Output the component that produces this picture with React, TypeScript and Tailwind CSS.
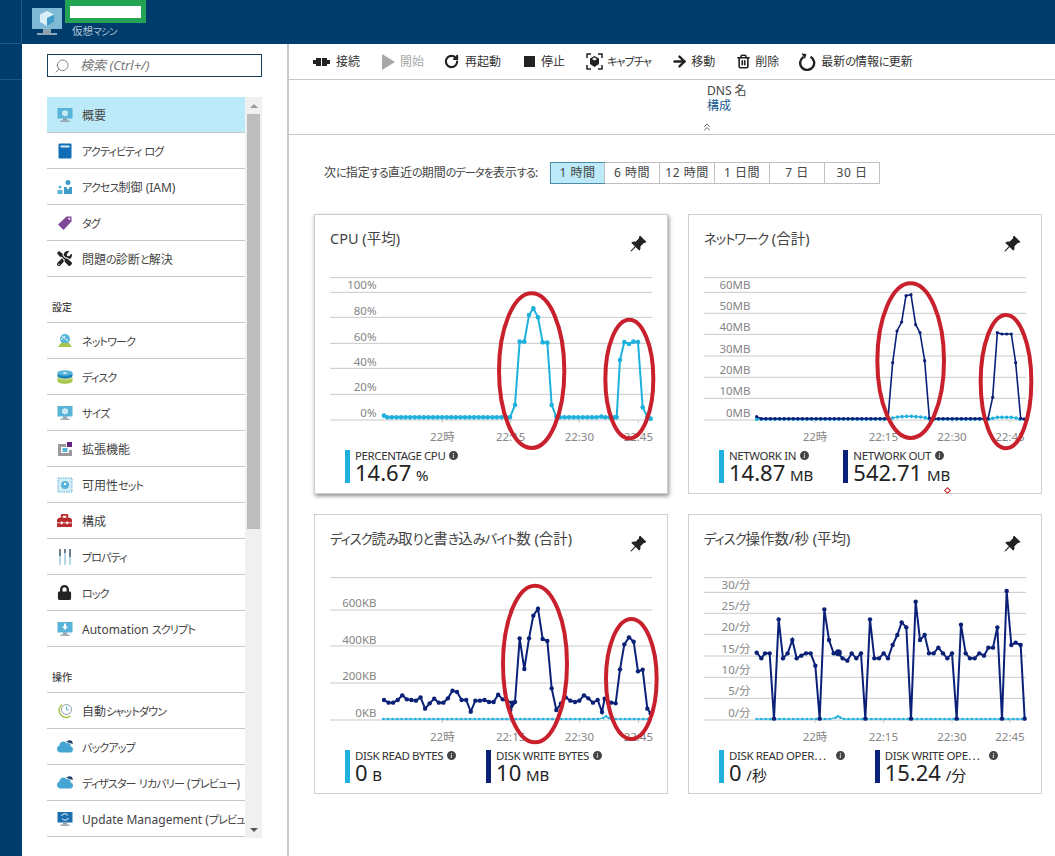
import { ArrowRight, ChevronsUp, RotateCw, Search, Trash2 } from "lucide-react";
import type { ReactNode } from "react";
import { BsInfoCircleFill, BsPinAngleFill } from "react-icons/bs";
import { FaLock, FaToolbox, FaTools, FaCloud } from "react-icons/fa";

type Pt = [number, number];

const LIGHT = "#1fb1dd";
const DARK = "#0b2178";

// chart data is in px of the 3x crops, toChart turns it into card coordinates
const toChart = (p: Pt): Pt => [p[0] / 3 - 4, p[1] / 3 - 64];

const flat = (x0: number, x1: number, y: number): Pt[] => {
  const out: Pt[] = [];
  for (let x = x0; x < x1; x += 13.7) out.push([x, y]);
  return out;
};

const seq = (x0: number, ys: number[]): Pt[] => ys.map((y, i) => [x0 + i * 13.7, y]);

// kana runs are set tighter, the original UI font has narrow kana
const Jp = ({ t }: { t: string }) => (
  <>
    {t.split(/([\u3040-\u30ff]+)/).map((s, i) =>
      i % 2 ? (
        <span key={i} className="text-[0.92em] tracking-[-0.08em]">
          {s}
        </span>
      ) : (
        s
      ),
    )}
  </>
);

const cpu: Pt[] = [
  [222, 617],
  ...flat(232, 600, 622),
  [600, 622], [615, 585], [629, 395], [643, 395], [657, 315], [670, 295], [684, 322],
  [698, 397], [712, 398], [725, 585], [739, 620],
  ...flat(750, 870, 622),
  [874, 620],
  ...flat(886, 920, 622),
  [920, 622], [930, 450], [943, 396], [957, 402], [970, 395], [984, 396], [998, 592], [1012, 620], [1022, 626],
];

const netOut: Pt[] = [
  [218, 620],
  ...flat(232, 612, 626),
  [612, 626], [626, 458], [639, 363], [653, 336], [666, 257], [681, 254], [695, 344],
  [708, 368], [722, 452], [736, 624],
  ...flat(750, 912, 626),
  [912, 626], [926, 562], [940, 368], [954, 372], [968, 372], [982, 372], [995, 458], [1010, 625], [1020, 627],
];

const netIn: Pt[] = [
  ...flat(218, 626, 628),
  [626, 624], [640, 621], [654, 620], [668, 619], [682, 619], [696, 620], [710, 621], [724, 623],
  ...flat(736, 926, 628),
  [926, 625], [940, 622], [954, 622], [968, 622], [982, 622], [996, 624],
  ...flat(1008, 1022, 628),
];

const diskWrite: Pt[] = [
  ...seq(222, [570, 578, 578, 570, 556, 568, 570, 572, 562, 596, 580, 566, 578, 578, 565, 542, 546, 570, 570, 605, 572, 572, 570, 576, 576, 554, 568, 574, 578]),
  [601, 600], [615, 576], [629, 385], [643, 477], [657, 385], [670, 317], [684, 296], [698, 387],
  [712, 393], [725, 535], [739, 600], [753, 580], [767, 562], [781, 572], [795, 576], [808, 572],
  [822, 556], [835, 565], [849, 578], [863, 570], [876, 606], [884, 566], [904, 578], [917, 580],
  [930, 478], [943, 403], [957, 382], [971, 395], [984, 484], [998, 479], [1012, 596], [1022, 610],
];

const diskRead: Pt[] = [...flat(220, 874, 627), [880, 624], [888, 619], [896, 624], ...flat(904, 1022, 627)];

const opsWrite: Pt[] = [
  [218, 428], [232, 445], [243, 430], [257, 430], [270, 626], [284, 328], [297, 445], [311, 430],
  [325, 390], [338, 445], [352, 437], [366, 430], [380, 430], [394, 467], [407, 626], [421, 298],
  [435, 390], [449, 430], [462, 430], [476, 445], [490, 452], [503, 430], [517, 445], [531, 430],
  [544, 626], [558, 328], [571, 445], [585, 445], [599, 430], [612, 445], [626, 405], [640, 375],
  [653, 337], [667, 352], [681, 626], [695, 275], [708, 390], [722, 375], [735, 430], [749, 430],
  [763, 413], [777, 430], [790, 445], [804, 430], [818, 626], [831, 344], [845, 430], [858, 445],
  [872, 445], [886, 430], [900, 437], [913, 413], [927, 413], [940, 352], [954, 626], [968, 243],
  [982, 405], [995, 398], [1010, 405], [1022, 626],
];

const opsRead: Pt[] = [...flat(218, 448, 627), [455, 623], [462, 619], [469, 623], ...flat(480, 1022, 627)];

type ChartProps = {
  grid: number[];
  labels: [string, number][];
  ticks: [string, number][];
  series: { pts: Pt[]; color: string; r: number; w: number }[];
  rings?: [number, number, number, number][];
  blob?: Pt;
};

const Chart = ({ grid, labels, ticks, series, rings, blob }: ChartProps) => (
  <svg width="354" height="176" viewBox="0 0 354 176" className="block overflow-visible">
    {grid.map((y) => (
      <line key={y} x1="16" x2="338" y1={y / 3 - 64} y2={y / 3 - 64} stroke="#c9c9c9" strokeWidth="1" />
    ))}
    {labels.map(([t, y]) => (
      <text key={t} x="62.5" y={y / 3 - 64 + 4} textAnchor="end" fontSize="11.5" fill="#858585">
        {t}
      </text>
    ))}
    {ticks.map(([t, x]) => (
      <g key={t}>
        <line x1={x / 3 - 4} x2={x / 3 - 4} y1="146" y2="149" stroke="#c9c9c9" />
        <text x={x / 3 - 4} y={680 / 3 - 64 + 4} textAnchor="middle" fontSize="11.5" fill="#858585">
          {t}
        </text>
      </g>
    ))}
    {series.map((s) => {
      const pts = s.pts.map(toChart);
      return (
        <g key={s.color}>
          <polyline points={pts.map((p) => p.join(",")).join(" ")} fill="none" stroke={s.color} strokeWidth={s.w} />
          {pts.map((p, i) => (
            <circle key={i} cx={p[0]} cy={p[1]} r={s.r} fill={s.color} />
          ))}
        </g>
      );
    })}
    {blob && <circle cx={toChart(blob)[0]} cy={toChart(blob)[1]} r="3.5" fill={DARK} />}
    {rings?.map(([cx, cy, rx, ry]) => (
      <ellipse key={cx} cx={cx / 3 - 4} cy={cy / 3 - 64} rx={rx / 3} ry={ry / 3} fill="none" stroke="#c8202c" strokeWidth="4" />
    ))}
  </svg>
);

const Metric = ({ color, label, value, unit, wide }: { color: string; label: string; value: string; unit: string; wide?: boolean }) => (
  <div className="flex gap-[5px]">
    <div className="w-[5px] h-[33px]" style={{ backgroundColor: color }} />
    <div className="-mt-[1px]">
      <div className="flex items-center text-[11.5px] leading-[13px] text-[#333] tracking-[-0.4px] whitespace-nowrap">
        {label}
        <BsInfoCircleFill size={9} className={wide ? "ml-[10px] text-[#444]" : "ml-[4px] text-[#444]"} />
      </div>
      <div className="text-[22px] leading-[21px] text-[#222] whitespace-nowrap">
        {value} <span className="-ml-[1px] text-[15px]">{unit}</span>
      </div>
    </div>
  </div>
);

const Card = ({ title, shadow, children, legend }: { title: string; shadow?: boolean; children: ReactNode; legend: ReactNode }) => (
  <div className={shadow ? "relative w-[354px] h-[280px] bg-white border border-[#cfcfcf] shadow-[1px_2px_4px_rgba(0,0,0,0.45)]" : "relative w-[354px] h-[280px] bg-white border border-[#cfcfcf]"}>
    <div className="h-[59px] flex justify-between pl-[15px] pr-[20px] pt-[13px]">
      <span className="text-[14.5px] leading-[20px] text-[#444]">
        <Jp t={title} />
      </span>
      <BsPinAngleFill size={18} className="mt-[7px] text-[#222]" />
    </div>
    <div className="-ml-px">{children}</div>
    <div className="flex gap-[30px] pl-[30px]">{legend}</div>
  </div>
);

const Monitor = ({ fill = "#59b4d9", children }: { fill?: string; children?: ReactNode }) => (
  <svg width="16" height="16" viewBox="0 0 16 16">
    <rect x="0.5" y="1" width="15" height="10.5" fill={fill} />
    <rect x="6" y="11.5" width="4" height="2" fill="#8c9aa3" />
    <rect x="3.5" y="13.5" width="9" height="1.3" fill="#8c9aa3" />
    {children}
  </svg>
);

const Cube = () => <path d="M8 3 11 4.5V8L8 9.5 5 8V4.5Z" fill="#c6e9f5" />;

const LogIcon = () => (
  <svg width="16" height="16" viewBox="0 0 16 16">
    <rect x="1.5" y="0.5" width="13" height="15" rx="1" fill="#0f6cb5" />
    <rect x="3.5" y="2.5" width="9" height="2" fill="#d5ecf8" />
  </svg>
);

const IamIcon = () => (
  <svg width="16" height="16" viewBox="0 0 16 16">
    <circle cx="11" cy="3.5" r="2.5" fill="#3f9cc8" />
    <path d="M7 8h8v7H7z" fill="#3f9cc8" />
    <path d="M9.5 8 11 11 12.5 8z" fill="#fff" />
    <circle cx="3" cy="8" r="1.5" fill="#59b4d9" />
    <path d="M0.5 11h5v4h-5z" fill="#59b4d9" />
  </svg>
);

const TagIcon = () => (
  <svg width="16" height="16" viewBox="0 0 16 16">
    <path d="M9.5 1.5h5v5L6.5 15 1 9.5z" fill="#804998" />
    <circle cx="12.3" cy="3.7" r="1" fill="#fff" />
  </svg>
);

const NetIcon = () => (
  <svg width="16" height="16" viewBox="0 0 16 16">
    <circle cx="8" cy="6" r="5" fill="#59b4d9" />
    <path d="M5 3 11 8M4 7l4-4" stroke="#fff" strokeWidth="1" />
    <path d="M4 10h8l3 4H1z" fill="#a6c34a" />
  </svg>
);

const DiskIcon = () => (
  <svg width="16" height="16" viewBox="0 0 16 16">
    <path d="M0.5 9v3c0 1.5 3.4 2.8 7.5 2.8s7.5-1.3 7.5-2.8V9z" fill="#a6c34a" />
    <ellipse cx="8" cy="9" rx="7.5" ry="2.5" fill="#c4d97c" />
    <path d="M0.5 4v3c0 1.5 3.4 2.5 7.5 2.5s7.5-1 7.5-2.5V4z" fill="#1b82c0" />
    <ellipse cx="8" cy="4" rx="7.5" ry="2.7" fill="#59b4d9" />
    <ellipse cx="8" cy="4" rx="2" ry="0.7" fill="#fff" />
  </svg>
);

const ExtIcon = () => (
  <svg width="16" height="16" viewBox="0 0 16 16">
    <path d="M1 3h8v3H4v6h8V9h3v6H1z" fill="#9a9a9e" />
    <rect x="5.5" y="7" width="5" height="4" fill="#59b4d9" />
    <rect x="10" y="1" width="5" height="5" fill="#68217a" />
  </svg>
);

const AvailIcon = () => (
  <svg width="16" height="16" viewBox="0 0 16 16">
    <rect x="1" y="1" width="14" height="14" fill="#d4edf7" stroke="#59b4d9" strokeDasharray="1.5 1" />
    <circle cx="8" cy="8" r="4" fill="#59b4d9" />
    <rect x="7" y="6" width="2" height="2" fill="#fff" />
  </svg>
);

const PropIcon = () => (
  <svg width="16" height="16" viewBox="0 0 16 16">
    <path d="M2 0h2v16H2zM7 0h2v16H7zM12 0h2v16h-2z" fill="#b6d7e6" />
    <path d="M2 0h2v7H2zM7 0h2v4H7zM12 0h2v8h-2z" fill="#6f7f88" />
  </svg>
);

const ClockIcon = () => (
  <svg width="16" height="16" viewBox="0 0 16 16">
    <path d="M5 1.5A7 7 0 1 0 13.5 13" fill="none" stroke="#a6c34a" strokeWidth="1.5" />
    <circle cx="9.5" cy="6.5" r="5" fill="#fff" stroke="#8a9aa3" strokeWidth="1" />
    <path d="M9.5 3.5v3.2h2.5" fill="none" stroke="#59b4d9" strokeWidth="1" />
  </svg>
);

const CloudIcon = () => (
  <span className="relative block w-[16px] h-[16px]">
    <FaCloud size={16} className="text-[#45a5d3]" />
    <svg width="7" height="7" viewBox="0 0 7 7" className="absolute right-0 top-0">
      <path d="M0 3 Q3 0 6 2 L7 5 L3.5 4 Q2 3 0 3Z" fill="#1c3f66" />
    </svg>
  </span>
);

const menuIcon = (key: string) => {
  switch (key) {
    case "vm":
      return <Monitor><Cube /></Monitor>;
    case "log":
      return <LogIcon />;
    case "iam":
      return <IamIcon />;
    case "tag":
      return <TagIcon />;
    case "tools":
      return <FaTools size={15} className="text-[#222]" />;
    case "net":
      return <NetIcon />;
    case "disk":
      return <DiskIcon />;
    case "ext":
      return <ExtIcon />;
    case "avail":
      return <AvailIcon />;
    case "box":
      return <FaToolbox size={15} className="text-[#b92a2e]" />;
    case "prop":
      return <PropIcon />;
    case "lock":
      return <FaLock size={15} className="text-[#222]" />;
    case "auto":
      return (
        <Monitor>
          <path d="M7 2.5h2v3h2L8 9 5 5.5h2z" fill="#fff" />
        </Monitor>
      );
    case "clock":
      return <ClockIcon />;
    case "cloud":
      return <CloudIcon />;
    default:
      return (
        <Monitor fill="#1b6fae">
          <path d="M4.5 5A3.5 3 0 0 1 11 4.5M11.5 7A3.5 3 0 0 1 5 7.5" stroke="#fff" strokeWidth="1" fill="none" />
        </Monitor>
      );
  }
};

const Row = ({ icon, label, active }: { icon: string; label: string; active?: boolean }) => (
  <div className={active ? "h-[36px] flex items-center border-b border-[#c8c8c8] bg-[#bdeaf8]" : "h-[36px] flex items-center border-b border-[#c8c8c8]"}>
    <span className="w-[35px] pl-[10px] shrink-0 flex">{menuIcon(icon)}</span>
    <span className="pt-[2px] text-[12px] text-[#444] whitespace-nowrap">
      <Jp t={label} />
    </span>
  </div>
);

const Section = ({ label, h }: { label: string; h: string }) => (
  <div className={h + " flex items-end pl-[5px] pb-[7px] border-b border-[#c8c8c8] text-[10px] font-medium text-[#444]"}>{label}</div>
);

const Tool = ({ icon, label, off, gap = "gap-[4px]" }: { icon: ReactNode; label: string; off?: boolean; gap?: string }) => (
  <div className={"flex items-center " + gap}>
    {icon}
    <span className={off ? "text-[12px] text-[#a8a8a8]" : "text-[12px] text-[#333]"}>
      <Jp t={label} />
    </span>
  </div>
);

const ranges = ["1 時間", "6 時間", "12 時間", "1 日間", "7 日", "30 日"];

export default function App() {
  return (
    <div className="w-[1055px] h-[856px] overflow-hidden bg-white flex flex-col font-['Noto_Sans','Noto_Sans_CJK_JP',sans-serif] [font-feature-settings:'palt']">
      {/* header */}
      <div className="h-[44px] shrink-0 bg-[#003c6c] flex">
        <div className="w-[22px] border-r border-[#1f5686] border-b" />
        <div className="pl-[10px] pt-[8px]">
          <svg width="30" height="28" viewBox="0 0 30 28">
            <rect x="0" y="0" width="30" height="21" fill="#7fb9d6" />
            <path d="M15 3 22 6.5V14L15 18 8 14V6.5Z" fill="#d9f0f9" />
            <path d="M15 10 22 6.5V14L15 18Z" fill="#3f9cc8" />
            <rect x="11" y="21" width="8" height="4" fill="#90a4b4" />
            <rect x="5" y="25" width="20" height="2" fill="#90a4b4" />
          </svg>
        </div>
        <div className="ml-[3px]">
          <div className="w-[81px] h-[23px] bg-[#23a455] pt-[6px] pl-[5px]">
            <div className="w-[71px] h-[12px] bg-white" />
          </div>
          <div className="pl-[7px] mt-[1px] text-[10.5px] leading-[14px] text-[#b5c6d6]">
            <Jp t="仮想マシン" />
          </div>
        </div>
      </div>

      <div className="flex flex-1 min-h-0">
        {/* left rail */}
        <div className="w-[22px] shrink-0 bg-[#003c6c]">
          <div className="h-[36px] border-b border-[#1f5686]" />
        </div>

        {/* blade menu */}
        <div className="w-[267px] shrink-0 border-r-2 border-[#c8c8c8] pl-[25px]">
          <div className="w-[215px] h-[23px] mt-[10px] border border-[#17405f] flex items-center pl-[6px] gap-[10px]">
            <Search size={16} strokeWidth={1.2} className="text-[#666] -scale-x-100" />
            <span className="text-[13px] italic text-[#777]">検索 (Ctrl+/)</span>
          </div>
          <div className="mt-[20px] flex w-[215px] h-[741px]">
            <div className="w-[198px] overflow-hidden">
              <Row icon="vm" label="概要" active />
              <Row icon="log" label="アクティビティ ログ" />
              <Row icon="iam" label="アクセス制御 (IAM)" />
              <Row icon="tag" label="タグ" />
              <Row icon="tools" label="問題の診断と解決" />
              <Section label="設定" h="h-[46px]" />
              <Row icon="net" label="ネットワーク" />
              <Row icon="disk" label="ディスク" />
              <Row icon="vm" label="サイズ" />
              <Row icon="ext" label="拡張機能" />
              <Row icon="avail" label="可用性セット" />
              <Row icon="box" label="構成" />
              <Row icon="prop" label="プロパティ" />
              <Row icon="lock" label="ロック" />
              <Row icon="auto" label="Automation スクリプト" />
              <Section label="操作" h="h-[46px]" />
              <Row icon="clock" label="自動シャットダウン" />
              <Row icon="cloud" label="バックアップ" />
              <Row icon="cloud" label="ディザスター リカバリー (プレビュー)" />
              <Row icon="update" label="Update Management (プレビュー)" />
            </div>
            <div className="w-[17px] bg-[#f0f0f0] flex flex-col items-center">
              <div className="h-[17px] flex items-center">
                <div className="w-0 h-0 border-x-[4px] border-x-transparent border-b-[4px] border-b-[#9a9a9a]" />
              </div>
              <div className="w-[13px] h-[415px] bg-[#bdbdbd]" />
              <div className="flex-1" />
              <div className="h-[17px] flex items-center">
                <div className="w-0 h-0 border-x-[4px] border-x-transparent border-t-[4px] border-t-[#555]" />
              </div>
            </div>
          </div>
        </div>

        {/* main */}
        <div className="flex-1 min-w-0">
          <div className="h-[36px] border-b border-[#c8c8c8] flex items-center pl-[24px] gap-[20px]">
            <Tool
              gap="gap-[6px] mr-[1px]"
              label="接続"
              icon={
                <svg width="17" height="10" viewBox="0 0 17 10">
                  <path d="M0 3h3V1h5v8H3V7H0zM9 1h5v2h3v4h-3v2H9z" fill="#222" />
                </svg>
              }
            />
            <Tool
              off
              label="開始"
              icon={
                <svg width="15" height="16" viewBox="0 0 15 16">
                  <path d="M1 0 14 8 1 16z" fill="#a8a8a8" />
                </svg>
              }
            />
            <Tool gap="gap-[6px]" label="再起動" icon={<RotateCw size={15} strokeWidth={3.4} className="text-[#222]" />} />
            <Tool gap="gap-[6px]" label="停止" icon={<span className="ml-[3px] block w-[11px] h-[11px] bg-[#222]" />} />
            <Tool
              gap="gap-[4px] ml-[1px]"
              label="キャプチャ"
              icon={
                <svg width="17" height="17" viewBox="0 0 17 17">
                  <path d="M1 5V1h4M12 1h4v4M16 12v4h-4M5 16H1v-4" fill="none" stroke="#222" strokeWidth="1.5" />
                  <path d="M8.5 3 13 5.5v5.5L8.5 14 4 11V5.5Z" fill="#222" />
                  <path d="M8.5 4.5 11 6 8.5 7.5 6 6Z" fill="#fff" />
                </svg>
              }
            />
            <Tool gap="gap-[3px]" label="移動" icon={<ArrowRight size={17} strokeWidth={3.4} className="text-[#222]" />} />
            <Tool gap="gap-[4px] ml-[1px]" label="削除" icon={<Trash2 size={15} strokeWidth={2.6} className="text-[#222]" />} />
            <Tool
              gap="gap-[5px]"
              label="最新の情報に更新"
              icon={
                <svg width="17" height="18" viewBox="0 0 17 18">
                  <path d="M11.5 3.8A7 7 0 1 1 4.5 4" fill="none" stroke="#222" strokeWidth="2.4" />
                  <path d="M2.5 0.5 7.5 1 6 6z" fill="#222" />
                </svg>
              }
            />
          </div>

          <div className="h-[55px] border-b border-[#c8c8c8] relative flex flex-col items-start pl-[418px] pt-[3px]">
            <div className="text-[12px] leading-[15px] text-[#444]">DNS 名</div>
            <div className="text-[12px] leading-[15px] text-[#15598f]">構成</div>
            <ChevronsUp size={12} strokeWidth={1.6} className="ml-[-6px] mt-[8px] text-[#444]" />
          </div>

          <div className="mt-[27px] pl-[35px] flex items-center">
            <span className="w-[226px] text-[12px] text-[#444] whitespace-nowrap">
              <Jp t="次に指定する直近の期間のデータを表示する:" />
            </span>
            <div className="flex border border-[#c0c0c0] h-[22px]">
              {ranges.map((r, i) => (
                <div
                  key={r}
                  className={
                    i === 0
                      ? "w-[55px] -m-px h-[22px] flex items-center justify-center text-[12px] tracking-[0.5px] text-[#444] bg-[#bdeaf8] border border-[#4f8ca8]"
                      : "w-[55px] flex items-center justify-center text-[12px] tracking-[0.5px] text-[#444] border-l border-[#c0c0c0] first:border-l-0"
                  }
                >
                  {r}
                </div>
              ))}
            </div>
          </div>

          <div className="mt-[30px] pl-[25px] grid grid-cols-[354px_354px] gap-x-[20px] gap-y-[20px]">
            <Card title="CPU (平均)" shadow legend={<Metric color={LIGHT} label="PERCENTAGE CPU" value="14.67" unit="%" />}>
              <Chart
                grid={[203, 247, 322, 400, 475, 553, 630]}
                labels={[["100%", 226], ["80%", 302], ["60%", 380], ["40%", 457], ["20%", 532], ["0%", 610]]}
                ticks={[["22時", 397], ["22:15", 602], ["22:30", 808], ["22:45", 985]]}
                series={[{ pts: cpu, color: LIGHT, r: 2.3, w: 2 }]}
                rings={[[665, 482, 98, 232], [958, 507, 72, 178]]}
              />
            </Card>
            <Card
              title="ネットワーク (合計)"
              legend={
                <>
                  <Metric color={LIGHT} label="NETWORK IN" value="14.87" unit="MB" />
                  <Metric color={DARK} label="NETWORK OUT" value="542.71" unit="MB" />
                </>
              }
            >
              <Chart
                grid={[203, 247, 310, 373, 438, 502, 565, 630]}
                labels={[["60MB", 226], ["50MB", 289], ["40MB", 352], ["30MB", 417], ["20MB", 481], ["10MB", 544], ["0MB", 610]]}
                ticks={[["22時", 393], ["22:15", 598], ["22:30", 804], ["22:45", 978]]}
                series={[
                  { pts: netIn, color: LIGHT, r: 1.8, w: 1.2 },
                  { pts: netOut, color: DARK, r: 1.6, w: 1.6 },
                ]}
                rings={[[680, 452, 100, 232], [966, 515, 76, 200]]}
              />
              <span className="absolute left-[256px] bottom-0 w-[5px] h-[5px] rotate-45 bg-white border border-[#c8202c]" />
            </Card>
            <Card
              title="ディスク読み取りと書き込みバイト数 (合計)"
              legend={
                <>
                  <Metric color={LIGHT} label="DISK READ BYTES" value="0" unit="B" />
                  <Metric color={DARK} label="DISK WRITE BYTES" value="10" unit="MB" />
                </>
              }
            >
              <Chart
                grid={[203, 300, 408, 519, 630]}
                labels={[["600KB", 280], ["400KB", 390], ["200KB", 498], ["0KB", 610]]}
                ticks={[["22時", 397], ["22:15", 602], ["22:30", 808], ["22:45", 985]]}
                series={[
                  { pts: diskRead, color: LIGHT, r: 1.3, w: 1.2 },
                  { pts: diskWrite, color: DARK, r: 2.2, w: 2 },
                ]}
                rings={[[675, 462, 96, 235], [964, 507, 76, 180]]}
              />
            </Card>
            <Card
              title="ディスク操作数/秒 (平均)"
              legend={
                <>
                  <Metric wide color={LIGHT} label="DISK READ OPER⋯" value="0" unit="/秒" />
                  <Metric wide color={DARK} label="DISK WRITE OPE⋯" value="15.24" unit="/分" />
                </>
              }
            >
              <Chart
                grid={[203, 247, 310, 373, 438, 502, 565, 630]}
                labels={[["30/分", 226], ["25/分", 289], ["20/分", 352], ["15/分", 417], ["10/分", 481], ["5/分", 544], ["0/分", 610]]}
                ticks={[["22時", 393], ["22:15", 598], ["22:30", 804], ["22:45", 978]]}
                series={[
                  { pts: opsRead, color: LIGHT, r: 1.3, w: 1.2 },
                  { pts: opsWrite, color: DARK, r: 2.2, w: 2 },
                ]}
                blob={[463, 428]}
              />
            </Card>
          </div>
        </div>
      </div>
    </div>
  );
}
